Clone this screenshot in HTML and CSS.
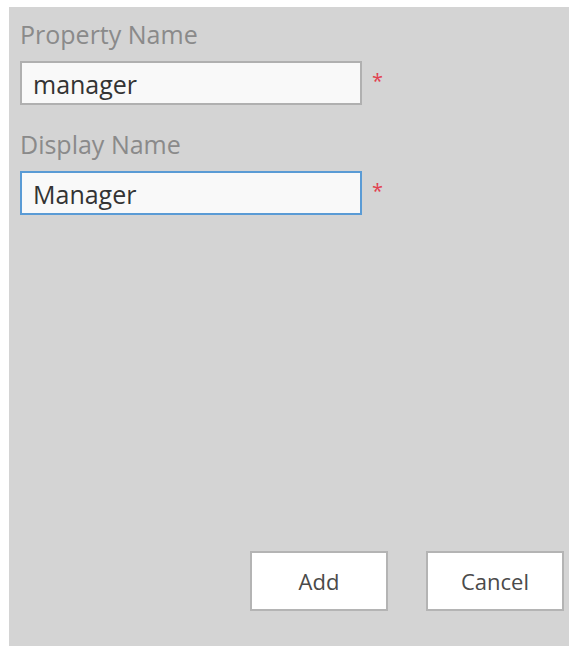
FILE: index.html
```html
<!DOCTYPE html>
<html>
<head>
<meta charset="utf-8">
<link rel="stylesheet" href="styles.css">
</head>
<body>
<div class="panel">
  <div class="field">
    <div class="label">Property Name</div>
    <div class="row">
      <div class="input">manager</div>
      <span class="req">*</span>
    </div>
  </div>
  <div class="field">
    <div class="label">Display Name</div>
    <div class="row">
      <div class="input focused">Manager</div>
      <span class="req">*</span>
    </div>
  </div>
  <div class="spacer"></div>
  <div class="actions">
    <div class="btn">Add</div>
    <div class="btn">Cancel</div>
  </div>
</div>
</body>
</html>
```
FILE: styles.css
```css
html, body {
  margin: 0;
  padding: 0;
  background: #ffffff;
}
body {
  padding: 7px 0 0 9px;
  font-family: "Open Sans", "Noto Sans", sans-serif;
}
.panel {
  width: 560px;
  height: 639px;
  background: #d4d4d4;
  box-sizing: border-box;
  padding: 12px 0 35px 11px;
  display: flex;
  flex-direction: column;
}
.field {
  display: flex;
  flex-direction: column;
}
.field + .field {
  margin-top: 24px;
}
.label {
  font-size: 25px;
  line-height: 30px;
  color: #8a8a8a;
  margin-bottom: 12px;
}
.row {
  display: flex;
  align-items: flex-start;
}
.input {
  width: 342px;
  height: 44px;
  box-sizing: border-box;
  border: 2px solid #b0b0b0;
  background: #f9f9f9;
  font-size: 25px;
  line-height: 38px;
  padding: 2px 0 0 11px;
  color: #333333;
}
.input.focused {
  border-color: #5a9bd5;
}
.req {
  color: #e2404f;
  font-size: 20px;
  line-height: 20px;
  margin-left: 10px;
  margin-top: 10px;
}
.spacer {
  flex: 1;
}
.actions {
  display: flex;
  justify-content: flex-end;
  gap: 38px;
  padding-right: 5px;
}
.btn {
  width: 138px;
  height: 60px;
  box-sizing: border-box;
  border: 2px solid #b4b4b4;
  background: #ffffff;
  display: flex;
  align-items: center;
  justify-content: center;
  font-size: 22px;
  color: #4a4a4a;
}
```
